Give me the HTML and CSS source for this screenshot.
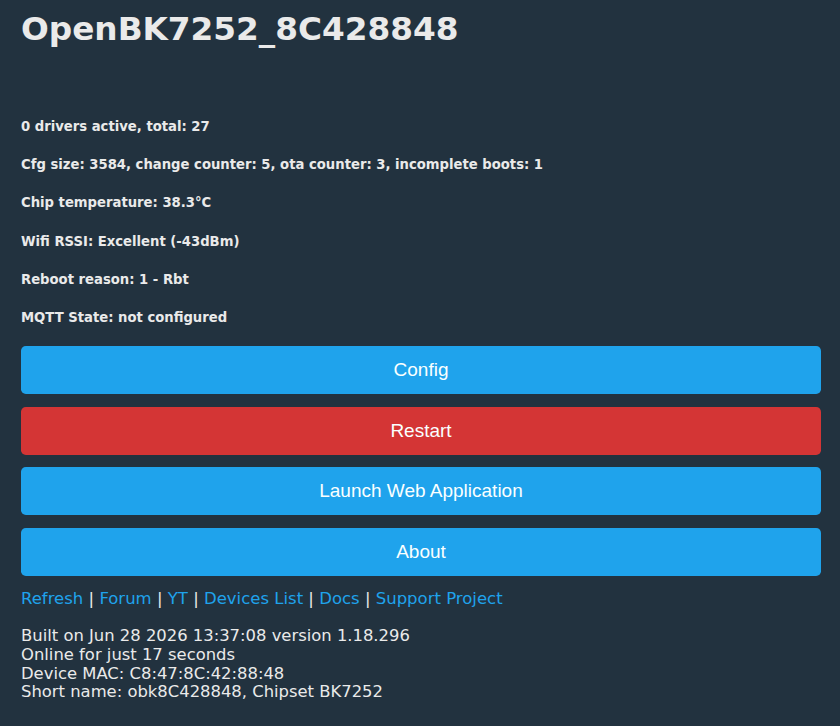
FILE: index.html
```html
<!DOCTYPE html>
<html lang="en">
<head>
	<meta charset="UTF-8">
	<title>OpenBK7252_8C428848</title>
	<link rel="stylesheet" href="styles.css">
</head>
<body>

	<div id="main">
		<h1>OpenBK7252_8C428848</h1>

		<div class="state">
			<h5>0 drivers active, total: 27</h5>
			<h5>Cfg size: 3584, change counter: 5, ota counter: 3, incomplete boots: 1</h5>
			<h5>Chip temperature: 38.3°C</h5>
			<h5>Wifi RSSI: Excellent (-43dBm)</h5>
			<h5>Reboot reason: 1 - Rbt</h5>
			<h5>MQTT State: not configured</h5>
		</div>

		<div class="buttons">
			<form action="cfg"><button type="submit">Config</button></form>
			<form action="reboot"><button type="submit" class="bred">Restart</button></form>
			<form action="app"><button type="submit">Launch Web Application</button></form>
			<form action="about"><button type="submit">About</button></form>
		</div>

		<div class="links">
			<a href="index">Refresh</a> | <a href="#">Forum</a> | <a href="#">YT</a> | <a href="#">Devices List</a> | <a href="#">Docs</a> | <a href="#">Support Project</a>
		</div>

		<div class="info">
			Built on Jun 28 2026 13:37:08 version 1.18.296<br>
			Online for just 17 seconds<br>
			Device MAC: C8:47:8C:42:88:48<br>
			Short name: obk8C428848, Chipset BK7252
		</div>
	</div>

</body>
</html>
```

FILE: styles.css
```css
body {
	margin: 0;
	background: #22323f;
	color: #eaeaea;
	font-family: "DejaVu Sans", Verdana, sans-serif;
}

#main {
	width: 800px;
	margin-left: 21px;
}

h1 {
	font-size: 32.7px;
	margin: 11px 0 0 0;
	line-height: 37px;
}

/********** state lines **********/
.state {
	margin-top: 71px;
}
.state h5 {
	font-size: 13.2px;
	line-height: 16px;
	margin: 0 0 22.2px 0;
}
.state h5:last-child {
	margin-bottom: 0;
}

/********** buttons **********/
.buttons {
	margin-top: 20px;
	display: flex;
	flex-direction: column;
	gap: 12.3px;
}
.buttons form {
	margin: 0;
}
button {
	display: block;
	width: 100%;
	height: 48.3px;
	border: 0;
	border-radius: 4.8px;
	background: #1fa3ec;
	color: #faffff;
	font-family: "Liberation Sans", Arial, sans-serif;
	font-size: 19px;
	cursor: pointer;
}
button.bred {
	background: #d43535;
}

/********** footer **********/
.links {
	margin-top: 13px;
	font-size: 16.5px;
	line-height: 19px;
}
.links a {
	color: #1fa3ec;
	text-decoration: none;
}
.info {
	margin-top: 19px;
	font-size: 16.4px;
	line-height: 18.8px;
}
```
